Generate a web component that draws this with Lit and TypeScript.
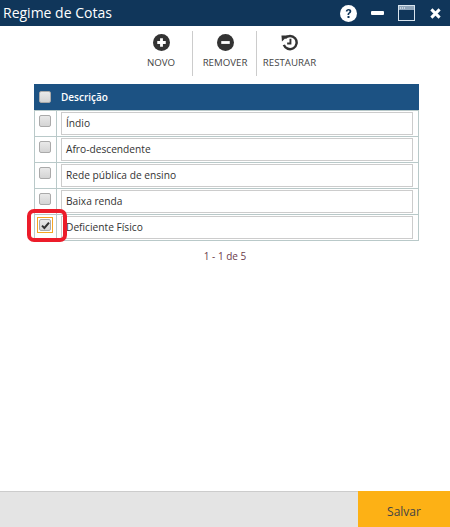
import { LitElement, css, html } from 'lit';
import { customElement } from 'lit/decorators.js';

const rows = [
  { text: 'Índio', checked: false },
  { text: 'Afro-descendente', checked: false },
  { text: 'Rede pública de ensino', checked: false },
  { text: 'Baixa renda', checked: false },
  { text: 'Deficiente Físico', checked: true },
];

@customElement('app-root')
export class AppRoot extends LitElement {
  static styles = css`
    :host {
      display: flex;
      flex-direction: column;
      height: 527px;
      width: 450px;
      background: #fff;
      font-family: 'Open Sans', 'Noto Sans', sans-serif;
      color: #333;
      overflow: hidden;
    }
    .title {
      height: 26px;
      background: #10365a;
      display: flex;
      align-items: center;
      padding: 0 9px 0 4px;
      color: #fff;
      font-size: 14px;
    }
    .title span { flex: 1; margin: -2px 0 0 -1px; }
    .win { display: flex; align-items: center; gap: 14px; }
    .toolbar {
      display: flex;
      justify-content: center;
      height: 45px;
      margin-top: 5px;
    }
    .tool {
      display: flex;
      flex-direction: column;
      align-items: center;
      gap: 5px;
      font-size: 9.7px;
      color: #444;
      padding: 3px 0 0 1px;
      box-sizing: border-box;
      width: 64px;
      border-right: 1px solid #ccc;
    }
    .tool:last-child { border-right: 0; }
    .tool svg { display: block; }
    .grid {
      position: relative;
      margin: 8px 31px 0 34px;
    }
    .head {
      height: 27px;
      box-sizing: border-box;
      background: #1c5283;
      border-bottom: 1px solid #b9c9c9;
      color: #fff;
      font-size: 10px;
      font-weight: 600;
      display: flex;
      align-items: center;
    }
    .cell-check {
      flex: none;
      display: flex;
      justify-content: center;
      align-items: center;
      box-sizing: border-box;
    }
    .head .cell-check { width: 23px; margin-right: 4px; padding-right: 1px; }
    .row {
      height: 26px;
      box-sizing: border-box;
      display: flex;
      border: 1px solid #b9c9c9;
      border-top: 0;
    }
    .row .cell-check {
      width: 22px;
      border-right: 1px solid #b9c9c9;
      align-items: flex-start;
      padding: 4px 1px 0 0;
    }
    .field {
      flex: 1;
      margin: 1px 5px 1px 4px;
      border: 1px solid #ccc;
      font-size: 10.2px;
      color: #333;
      line-height: 21px;
      padding-left: 4px;
    }
    .box {
      width: 10px;
      height: 10px;
      border: 1px solid #aaa;
      border-radius: 2px;
      background: linear-gradient(#e9e9e9, #d4d4d4);
      display: flex;
      align-items: center;
      justify-content: center;
    }
    .focus {
      padding: 1px;
      border: 1px solid #f5a623;
      display: flex;
      margin: -2px;
    }
    .mark {
      position: absolute;
      left: -7px;
      top: 125px;
      width: 32px;
      height: 25px;
      border: 4px solid #ec1c2a;
      border-radius: 7px;
    }
    .pager {
      text-align: center;
      font-size: 10px;
      color: #6b3a4a;
      margin-top: 8px;
    }
    .spacer { flex: 1; }
    .footer {
      height: 36px;
      background: #e4e4e4;
      border-top: 1px solid #ccc;
      box-sizing: border-box;
      display: flex;
      justify-content: flex-end;
    }
    .save {
      width: 92px;
      background: #fdb115;
      color: #444;
      font-size: 12px;
      display: flex;
      align-items: center;
      justify-content: center;
      padding-top: 5px;
      box-sizing: border-box;
      margin-top: -1px;
    }
  `;

  private box(checked = false) {
    const inner = html`<div class="box">
      ${checked
        ? html`<svg width="9" height="9" viewBox="0 0 9 9"><path d="M1 4.600 3.400 7 8 1.600" fill="none" stroke="#333" stroke-width="2"/></svg>`
        : ''}
    </div>`;
    return checked ? html`<div class="focus">${inner}</div>` : inner;
  }

  render() {
    return html`
      <div class="title">
        <span>Regime de Cotas</span>
        <div class="win">
          <svg width="17" height="17" viewBox="0 0 17 17">
            <circle cx="8.500" cy="8.500" r="8.500" fill="#fff"/>
            <path d="M5.800 6.600c0-1.700 1.200-2.600 2.800-2.600s2.700.9 2.700 2.300c0 1.900-2.200 1.900-2.200 3.600H7.500c0-2.500 2-2.500 2-3.500 0-.5-.4-.9-1-.9s-1 .4-1 1.100z" fill="#10365a"/>
            <rect x="7.500" y="11" width="2" height="2" fill="#10365a"/>
          </svg>
          <svg width="13" height="4" viewBox="0 0 13 4"><rect width="13" height="4" rx="1" fill="#fff"/></svg>
          <svg width="17" height="16" viewBox="0 0 17 16">
            <rect x=".5" y=".5" width="16" height="15" fill="none" stroke="#d8e4ee"/>
            <rect x="1" y="1" width="15" height="4" fill="#8fa5ba"/>
            <path d="M2 3h1M4 3h1M6 3h1" stroke="#fff"/>
          </svg>
          <svg width="11" height="11" viewBox="0 0 12 12" style="margin-left:1px">
            <path d="M1.500 1.500l9 9M10.500 1.500l-9 9" stroke="#fff" stroke-width="3.200"/>
          </svg>
        </div>
      </div>
      <div class="toolbar">
        <div class="tool">
          <svg width="17" height="17" viewBox="0 0 18 18">
            <circle cx="9" cy="9" r="9" fill="#333"/>
            <path d="M9 4.500v9M4.500 9h9" stroke="#fff" stroke-width="3"/>
          </svg>
          NOVO
        </div>
        <div class="tool">
          <svg width="17" height="17" viewBox="0 0 18 18">
            <circle cx="9" cy="9" r="9" fill="#333"/>
            <path d="M4.500 9h9" stroke="#fff" stroke-width="3"/>
          </svg>
          REMOVER
        </div>
        <div class="tool">
          <svg width="17" height="17" viewBox="0 0 18 18">
            <path d="M4.200 4.500A7 7 0 1 1 3 11.500" fill="none" stroke="#333" stroke-width="2.600"/>
            <path d="M0.500 1.500 7.500 1.500 1 8z" fill="#333"/>
            <path d="M10 5v5H6.500" fill="none" stroke="#333" stroke-width="2"/>
          </svg>
          RESTAURAR
        </div>
      </div>
      <div class="grid">
        <div class="head">
          <div class="cell-check">${this.box()}</div>
          Descrição
        </div>
        ${rows.map(
          (r) => html`<div class="row">
            <div class="cell-check">${this.box(r.checked)}</div>
            <div class="field">${r.text}</div>
          </div>`,
        )}
        <div class="mark"></div>
      </div>
      <div class="pager">1 - 1 de 5</div>
      <div class="spacer"></div>
      <div class="footer"><div class="save">Salvar</div></div>
    `;
  }
}
